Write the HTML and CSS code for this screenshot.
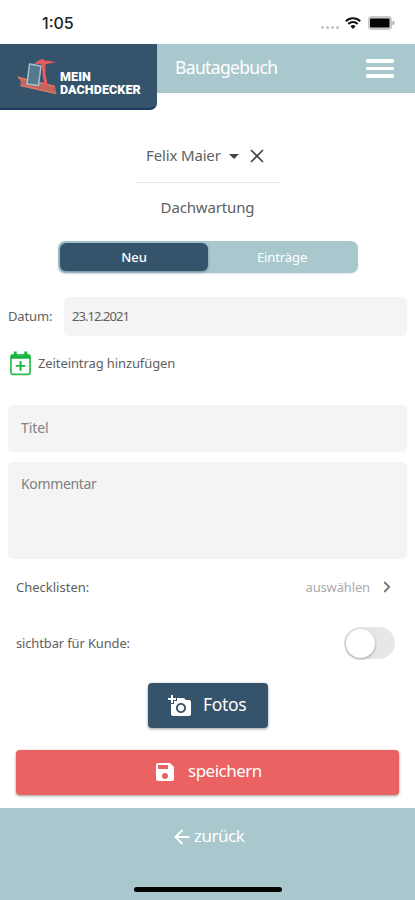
FILE: index.html
```html
<!DOCTYPE html>
<html lang="de">
<head>
<meta charset="utf-8">
<meta name="viewport" content="width=device-width, initial-scale=1">
<title>Bautagebuch</title>
<link rel="stylesheet" href="styles.css">
</head>
<body>
<div class="status">
  <span class="time">1:05</span>
  <div class="indicators">
    <span class="dots"><i></i><i></i><i></i><i></i></span>
    <svg class="wifi" viewBox="0 0 16 12"><g fill="none" stroke="#111" stroke-width="1.9"><path d="M.8 4.2a10.3 10.3 0 0 1 14.400 0"/><path d="M3.300 7a6.700 6.700 0 0 1 9.400 0"/></g><path d="M5.400 9.200a3.700 3.700 0 0 1 5.200 0L8 11.900z" fill="#111"/></svg>
    <svg class="battery" viewBox="0 0 27 14"><rect x=".8" y=".8" width="22.400" height="12.400" rx="3" fill="#ccc" stroke="#c8c8c8" stroke-width="1.600"/><rect x="2" y="2.500" width="19.500" height="9" rx="1" fill="#050505"/><path d="M24.500 4.600Q26.500 5.400 26.500 7T24.500 9.400z" fill="#aaa"/></svg>
  </div>
</div>
<header class="header">
  <div class="brand">
    <svg class="logo" viewBox="0 0 40 38">
      <path d="M0 18L10 21 38 28 39.500 36 3 28 4 24z" fill="#c0665d"/>
      <path d="M1 19.500L38 28.500M4 27.500L39 35.500" stroke="#d97768" stroke-width="1.400"/>
      <path d="M17 6.500Q21 1.500 26 1L28 2.500Q34 2.500 39 4.800Q33 5 28.500 6.200L28.500 16 31 29 27.500 28 25.500 17 25 7Q21 5 17 6.500z" fill="#e45c5e"/>
      <path d="M12.500 6L24 8 21.500 27.500 10 26z" fill="#557a90" stroke="#a0c4ce" stroke-width="1.500" stroke-linejoin="round"/>
    </svg>
    <div class="brand-name"><div>MEIN</div><div>DACHDECKER</div></div>
  </div>
  <div class="bar"><h1>Bautagebuch</h1><span class="menu"><i></i><i></i><i></i></span></div>
</header>
<main>
  <div class="customer"><span class="name">Felix Maier</span><svg class="caret" viewBox="0 0 10 5"><path d="M0 0h10L5 5z"/></svg><svg class="close" viewBox="0 0 14 14"><path d="M1 1l12 12M13 1L1 13"/></svg></div>
  <div class="project">Dachwartung</div>
  <div class="tabs"><span class="tab active">Neu</span><span class="tab">Einträge</span></div>
  <div class="date-row"><label>Datum:</label><div class="field date">23.12.2021</div></div>
  <div class="entry">
    <svg viewBox="0 0 22 25"><path d="M3 3.500h16a2 2 0 0 1 2 2V22a2 2 0 0 1-2 2H3a2 2 0 0 1-2-2V5.500a2 2 0 0 1 2-2z" fill="#fff" stroke="#29bd50" stroke-width="1.800"/><path d="M1 4h20v3.500H1zM4 0h3v4H4zM15 0h3v4h-3z" fill="#16b540"/><path d="M11 10v10M6 15h10" stroke="#16b540" stroke-width="2"/></svg>
    <span>Zeiteintrag hinzufügen</span>
  </div>
  <div class="field title-field">Titel</div>
  <div class="field comment">Kommentar</div>
  <div class="row check"><span>Checklisten:</span><span class="choose"><span>auswählen</span><svg viewBox="0 0 8 12"><path d="M1.200 1l5 5-5 5"/></svg></span></div>
  <div class="row visible"><span class="visible-label">sichtbar für Kunde:</span><span class="switch"><i></i></span></div>
  <div class="btn photos"><svg viewBox="0 0 24 24"><path d="M3 4V1h2v3h3v2H5v3H3V6H0V4h3zm3 6V7h3V4h7l1.830 2H21c1.100 0 2 .9 2 2v12c0 1.100-.9 2-2 2H5c-1.100 0-2-.9-2-2V10h3zm7 9c2.760 0 5-2.240 5-5s-2.240-5-5-5-5 2.240-5 5 2.240 5 5 5zm-3.200-5c0 1.770 1.430 3.200 3.200 3.200s3.200-1.430 3.200-3.200-1.430-3.200-3.200-3.200-3.200 1.430-3.200 3.200z"/></svg><span>Fotos</span></div>
  <div class="btn save"><svg viewBox="3 3 18 18"><path d="M17 3H5a2 2 0 0 0-2 2v14a2 2 0 0 0 2 2h14a2 2 0 0 0 2-2V7l-4-4zm-5 16a3 3 0 1 1 0-6 3 3 0 0 1 0 6zm3-10H5V5h10v4z"/></svg><span>speichern</span></div>
</main>
<footer class="footer"><div class="back"><svg viewBox="0 0 16 16"><path d="M15.500 8H1.500M8.500 1L1.500 8l7 7"/></svg><span>zurück</span></div><div class="home"></div></footer>
</body>
</html>
```
FILE: styles.css
```css
* { box-sizing: border-box; }
body { margin: 0; width: 415px; height: 900px; overflow: hidden; display: flex; flex-direction: column; background: #fff; color: #606060; font-family: "Noto Sans", sans-serif; font-size: 13px; line-height: 20px; }
svg { display: block; flex: none; }
span { white-space: nowrap; }
.status { height: 44px; flex: none; display: flex; justify-content: space-between; padding: 13px 20px 0 42px; }
.time { font: 500 16px/20px Inter, sans-serif; color: #222; }
.indicators { display: flex; height: 20px; align-items: center; }
.dots { display: flex; gap: 2px; margin: 8px 6px 0 0; }
.dots i { width: 3px; height: 3px; border-radius: 50%; background: #c2c2c2; }
.wifi { width: 16px; height: 12px; margin-right: 7px; }
.battery { width: 27px; height: 14px; }
.header { height: 66px; flex: none; display: flex; align-items: flex-start; }
.brand { width: 157px; height: 66px; background: #35536a; border-bottom: 2px solid #193c5e; border-radius: 0 0 7px 0; display: flex; padding: 14px 0 0 17px; }
.logo { width: 40px; height: 38px; }
.brand-name { margin: 12px 0 0 3px; color: #fff; font: 900 12.500px/13px Roboto, sans-serif; letter-spacing: .1px; }
.brand-name div { height: 13px; }
.bar { flex: 1; height: 49px; background: #a8c8ce; display: flex; justify-content: space-between; padding: 12px 21px 0 18px; }
h1 { margin: 0; font-size: 17.500px; line-height: 22px; font-weight: 400; color: #fff; letter-spacing: -.65px; }
.menu { display: flex; flex-direction: column; gap: 4px; padding-top: 3px; }
.menu i { width: 28px; height: 3.500px; background: #fff; border-radius: 1px; }
main { height: 698px; flex: none; display: flex; flex-direction: column; }
.customer { width: 144px; height: 73px; margin: 0 0 0 136px; padding: 35px 0 0 10px; border-bottom: 1.500px solid #e7e7e7; display: flex; }
.name { width: 75px; font-size: 15px; letter-spacing: -.15px; }
.caret { width: 10px; height: 5px; margin: 9px 11px 0 8px; fill: #444; }
.close { width: 14px; height: 14px; margin-top: 4px; fill: none; stroke: #444; stroke-width: 1.700; }
.project { height: 58px; padding-top: 14px; text-align: center; font-size: 15px; letter-spacing: -.15px; }
.tabs { width: 300px; height: 32px; flex: none; margin-left: 58px; border-radius: 7px; background: #a8c8ce; display: flex; padding: 2px; color: #fff; box-shadow: 0 1px 2px #35536a22; }
.tab { flex: 1; text-align: center; line-height: 29px; font-size: 13px; letter-spacing: -.1px; }
.active { background: #35536a; border-radius: 6px; font-weight: 500; flex: 0 0 148px; box-shadow: 0 1px 3px #35536a88; }
.date-row { display: flex; margin: 24px 8px 0; }
.date-row label { width: 56px; line-height: 38px; letter-spacing: -.15px; }
.field { background: #f4f4f4; border-radius: 5px; margin: 0 8px; padding: 13px; color: #808080; font-size: 14px; letter-spacing: -.35px; }
.date { flex: 1; height: 39px; margin: 0; padding: 0 8px; line-height: 38px; font-size: 13px; color: #606060; letter-spacing: -.95px; }
.entry { display: flex; height: 69px; padding: 15px 0 0 10px; }
.entry svg { width: 21px; height: 25px; margin-right: 7px; }
.entry span { line-height: 25px; letter-spacing: -.1px; }
.title-field { height: 47px; flex: none; letter-spacing: -.1px; }
.comment { height: 97px; flex: none; margin-top: 10px; padding-top: 12px; }
.row { display: flex; justify-content: space-between; padding: 0 20px 0 16px; }
.check { height: 57px; padding-top: 18px; }
.choose { display: flex; color: #aaa; letter-spacing: -.15px; }
.choose svg { width: 8px; height: 12px; margin: 4px 4px 0 13px; fill: none; stroke: #777; stroke-width: 1.800; }
.visible { height: 67px; padding-top: 11px; }
.visible-label { line-height: 32px; letter-spacing: -.15px; }
.switch { width: 51px; height: 32px; background: #e7e7e7; border-radius: 16px; padding: 1.500px; }
.switch i { display: block; width: 29px; height: 29px; background: #fff; border-radius: 50%; box-shadow: 0 1px 3px #0005; }
.btn { display: flex; color: #fff; border-radius: 4px; box-shadow: 0 1px 3px #0006; flex: none; align-items: flex-start; }
.btn svg { fill: #fff; }
.photos { width: 120px; height: 45px; margin-left: 148px; background: #35536a; padding: 11px 0 0 20px; font-size: 17.500px; letter-spacing: -.3px; }
.photos svg { width: 24px; height: 24px; margin-right: 11px; }
.save { height: 45px; margin: 22px 16px 0; background: #ea6262; padding: 11px 0 0 140px; font-size: 17px; letter-spacing: -.5px; }
.save svg { width: 18px; height: 18px; margin: 2px 14px 0 0; }
.footer { height: 92px; flex: none; background: #a8c8ce; color: #fff; }
.back { display: flex; height: 79px; padding: 18px 0 0 174px; font-size: 17px; letter-spacing: -.5px; }
.back svg { width: 16px; height: 16px; margin: 3px 4px 0 0; fill: none; stroke: #fff; stroke-width: 2; }
.home { width: 148px; height: 5px; margin-left: 134px; border-radius: 3px; background: #050505; }
```
